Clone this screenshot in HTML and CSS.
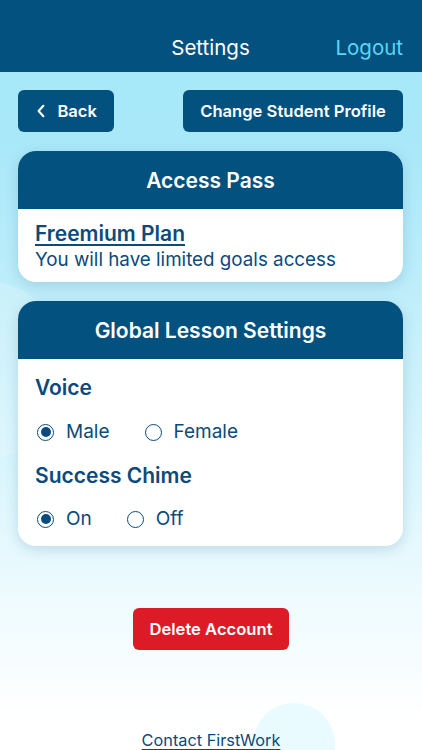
FILE: index.html
```html
<!DOCTYPE html>
<html lang="en">
<head>
    <meta charset="UTF-8">
    <meta name="viewport" content="width=device-width, initial-scale=1.0">
    <title>Settings</title>
    <link rel="stylesheet" href="styles.css">
</head>
<body>

    <div class="bg-blob blob-left"></div>
    <div class="bg-blob blob-bottom"></div>

    <header class="top-bar">
        <span></span>
        <h1 class="top-title">Settings</h1>
        <a class="logout" href="#">Logout</a>
    </header>

    <div class="toolbar">
        <button class="btn btn-back">
            <svg width="12" height="16" viewBox="0 0 12 16" aria-hidden="true">
                <path d="M8.5 2 L3 8 L8.5 14" fill="none" stroke="#fff" stroke-width="2.4" stroke-linecap="round" stroke-linejoin="round"/>
            </svg>
            Back
        </button>
        <button class="btn btn-profile">Change Student Profile</button>
    </div>

    <section class="card">
        <h2 class="card-head">Access Pass</h2>
        <div class="card-body plan-body">
            <a class="plan-link" href="#">Freemium Plan</a>
            <p class="plan-note">You will have limited goals access</p>
        </div>
    </section>

    <section class="card">
        <h2 class="card-head">Global Lesson Settings</h2>
        <div class="card-body settings-body">
            <h3 class="setting-label">Voice</h3>
            <div class="radio-row">
                <label class="radio"><span class="dot checked"></span>Male</label>
                <label class="radio"><span class="dot"></span>Female</label>
            </div>
            <h3 class="setting-label">Success Chime</h3>
            <div class="radio-row">
                <label class="radio"><span class="dot checked"></span>On</label>
                <label class="radio"><span class="dot"></span>Off</label>
            </div>
        </div>
    </section>

    <div class="danger-zone">
        <button class="btn btn-danger">Delete Account</button>
    </div>

    <footer class="foot">
        <a class="contact" href="#">Contact FirstWork</a>
    </footer>

</body>
</html>
```

FILE: styles.css
```css
/* Reset */
* {
    margin: 0;
    padding: 0;
    box-sizing: border-box;
}

body {
    font-family: 'Inter', 'Noto Sans', sans-serif;
    width: 422px;
    height: 750px;
    overflow: hidden;
    position: relative;
    color: #0b4a7c;
    background: linear-gradient(180deg, #a4e8f9 0px, #a8e8f9 140px, #d2f3fc 420px, #eefbff 600px, #ffffff 720px);
}

/* Decorative background shapes */
.bg-blob {
    position: absolute;
    border-radius: 50%;
    z-index: 0;
}

.blob-left {
    width: 180px;
    height: 180px;
    left: -110px;
    top: 280px;
    background: rgba(255, 255, 255, 0.18);
}

.blob-bottom {
    width: 82px;
    height: 82px;
    left: 253px;
    top: 703px;
    background: #e9fbff;
}

/* Top bar */
.top-bar {
    position: relative;
    z-index: 1;
    height: 72px;
    padding: 23px 19px 0 18px;
    background: #03517f;
    display: grid;
    grid-template-columns: 1fr auto 1fr;
    align-items: center;
}

.top-title {
    font-size: 20.5px;
    font-weight: 400;
    color: #fff;
    line-height: 49px;
    height: 49px;
}

.logout {
    justify-self: end;
    font-size: 20.5px;
    color: #5dd5f4;
    text-decoration: none;
    line-height: 49px;
}

/* Buttons */
.toolbar {
    position: relative;
    z-index: 1;
    display: flex;
    justify-content: space-between;
    margin: 18px 19px 0 18px;
}

.btn {
    font-family: inherit;
    font-size: 16.6px;
    font-weight: 600;
    color: #fff;
    background: #03517f;
    border: none;
    border-radius: 6px;
    height: 42px;
    padding: 0 17px;
    display: flex;
    align-items: center;
    gap: 11px;
    white-space: nowrap;
}

.btn-back {
    width: 96px;
    padding-left: 18px;
}

.btn-profile {
    width: 220px;
    justify-content: center;
}

.btn-danger {
    background: #dd1b27;
    width: 156px;
    padding: 0;
    justify-content: center;
    border-radius: 6px;
}

/* Cards */
.card {
    position: relative;
    z-index: 1;
    margin: 19px 19px 0 18px;
    background: #fff;
    border-radius: 18px;
    overflow: hidden;
    box-shadow: 0 4px 14px rgba(20, 90, 130, 0.18);
}

.card-head {
    height: 58px;
    background: #03517f;
    color: #fff;
    font-size: 21px;
    font-weight: 600;
    display: flex;
    align-items: center;
    justify-content: center;
}

.plan-body {
    padding: 13px 17px 10px 17px;
}

.plan-link {
    display: block;
    font-size: 21px;
    font-weight: 600;
    line-height: 24px;
    color: #0b4a7c;
    text-decoration: underline;
    text-decoration-thickness: 2px;
    text-underline-offset: 3px;
}

.plan-note {
    margin-top: 2px;
    font-size: 18.8px;
    line-height: 24px;
}

.settings-body {
    padding: 16px 17px 14px 17px;
}

.setting-label {
    font-size: 21px;
    font-weight: 600;
    line-height: 26px;
}

.radio-row {
    display: flex;
    gap: 35px;
    margin: 18px 0 18px 2px;
}

.radio-row:last-child {
    margin-bottom: 0;
    margin-top: 17px;
}

.radio {
    display: flex;
    align-items: center;
    gap: 12px;
    font-size: 19px;
    line-height: 26px;
}

.dot {
    width: 17px;
    height: 17px;
    border: 1.6px solid #0b4a7c;
    border-radius: 50%;
    display: flex;
    align-items: center;
    justify-content: center;
}

.dot.checked::after {
    content: '';
    width: 10px;
    height: 10px;
    border-radius: 50%;
    background: #0b4a7c;
}

/* Bottom */
.danger-zone {
    position: relative;
    z-index: 1;
    display: flex;
    justify-content: center;
    margin-top: 62px;
}

.foot {
    position: relative;
    z-index: 1;
    text-align: center;
    margin-top: 80px;
}

.contact {
    font-size: 16.3px;
    line-height: 20px;
    color: #0b4a7c;
    text-underline-offset: 3px;
}
```
